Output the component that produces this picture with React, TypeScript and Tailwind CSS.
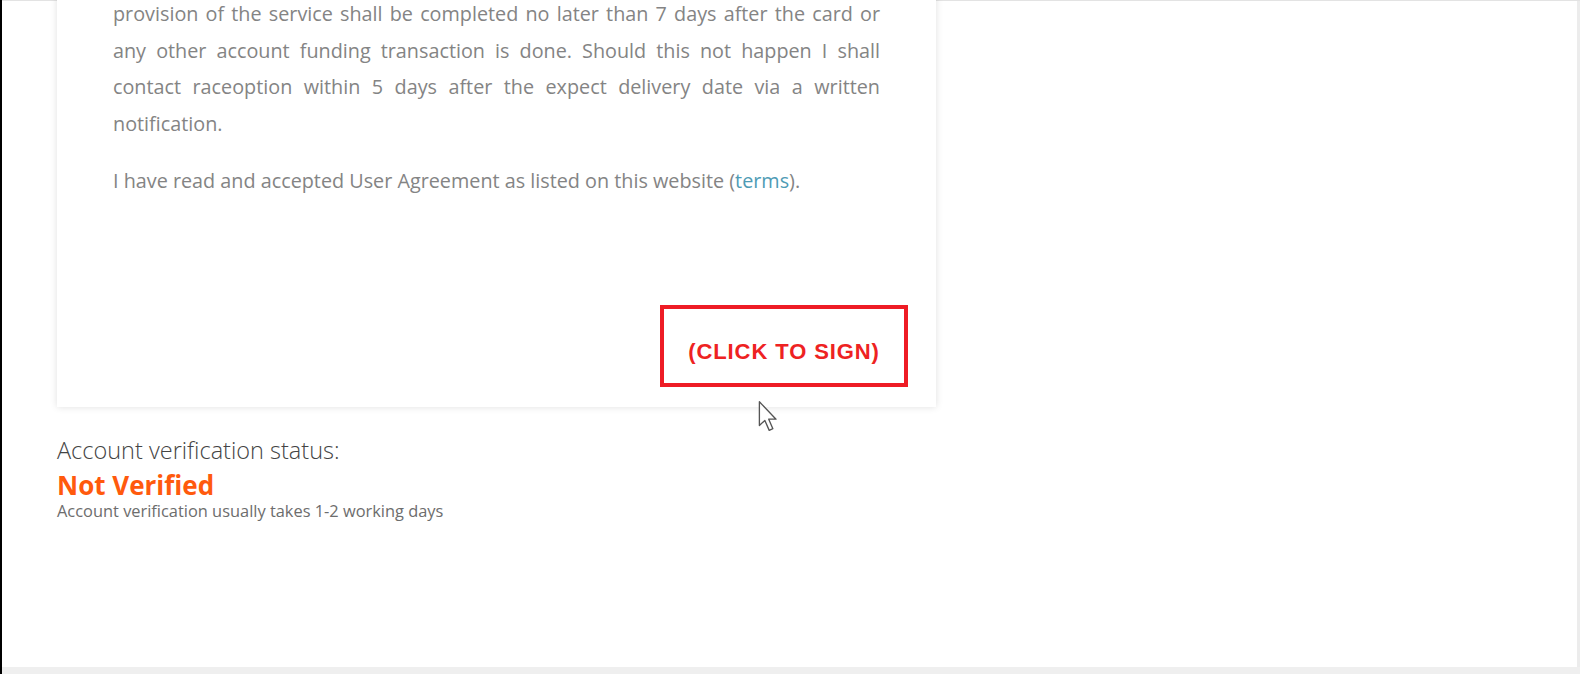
import React from "react";

function Cursor() {
  return (
    <svg width="23" height="34" viewBox="0 0 18 28" className="absolute left-[757px] top-[400px]">
      <path
        d="M1.5 1.5 L1.5 21 L6 16.8 L9.6 25 L12.6 23.6 L9.2 15.8 L15.2 15.8 Z"
        fill="#ffffff"
        stroke="#555555"
        strokeWidth="1.1"
        strokeLinejoin="round"
      />
    </svg>
  );
}

export default function App() {
  return (
    <div
      className="relative w-[1580px] h-[674px] overflow-hidden bg-white flex"
      style={{ fontFamily: "'Open Sans', 'Noto Sans', sans-serif" }}
    >
      <div className="w-[2px] bg-black shrink-0" />
      <div className="flex-1 flex flex-col border-t border-[#e3e3e3]">
        <div className="flex-1 flex border-r-[3px] border-[#ececec]">
          <div className="pl-[55px] flex flex-col">
            {/* agreement card */}
            <div className="w-[879px] -mt-[23px] bg-white shadow-[0_0_7px_rgba(0,0,0,0.13)] px-[56px] pt-[18px] pb-[20px] flex flex-col">
              <p className="text-[19.8px] leading-[36.6px] text-[#848484] text-justify">
                provision of the service shall be completed no later than 7 days after the card or any other account
                funding transaction is done. Should this not happen I shall contact raceoption within 5 days after the
                expect delivery date via a written notification.
              </p>
              <p className="mt-[21px] text-[19.8px] leading-[36.6px] text-[#848484]">
                I have read and accepted User Agreement as listed on this website (
                <span className="text-[#4e9bb5]">terms</span>).
              </p>
              <div className="flex justify-end mt-[105px] -mr-[28px]">
                <button className="w-[248px] h-[82px] border-[4px] border-[#ee1c25] flex items-center justify-center pt-[12px]">
                  <span
                    className="text-[22px] font-bold tracking-[0.9px] text-[#ee2222]"
                    style={{ fontFamily: "'Liberation Sans', Arial, sans-serif" }}
                  >
                    (CLICK TO SIGN)
                  </span>
                </button>
              </div>
            </div>

            {/* verification status */}
            <div className="mt-[29px] flex flex-col">
              <div className="text-[23.5px] leading-[28px] font-light text-[#444444]">Account verification status:</div>
              <div className="text-[26px] leading-[30px] font-bold text-[#ff5a0d] mt-[6px]">Not Verified</div>
              <div className="text-[16.4px] leading-[18px] text-[#6d6d6d] mt-[2px]">
                Account verification usually takes 1-2 working days
              </div>
            </div>
          </div>
        </div>
        <div className="h-[7px] bg-[#efefef] shrink-0" />
      </div>
      <Cursor />
    </div>
  );
}
